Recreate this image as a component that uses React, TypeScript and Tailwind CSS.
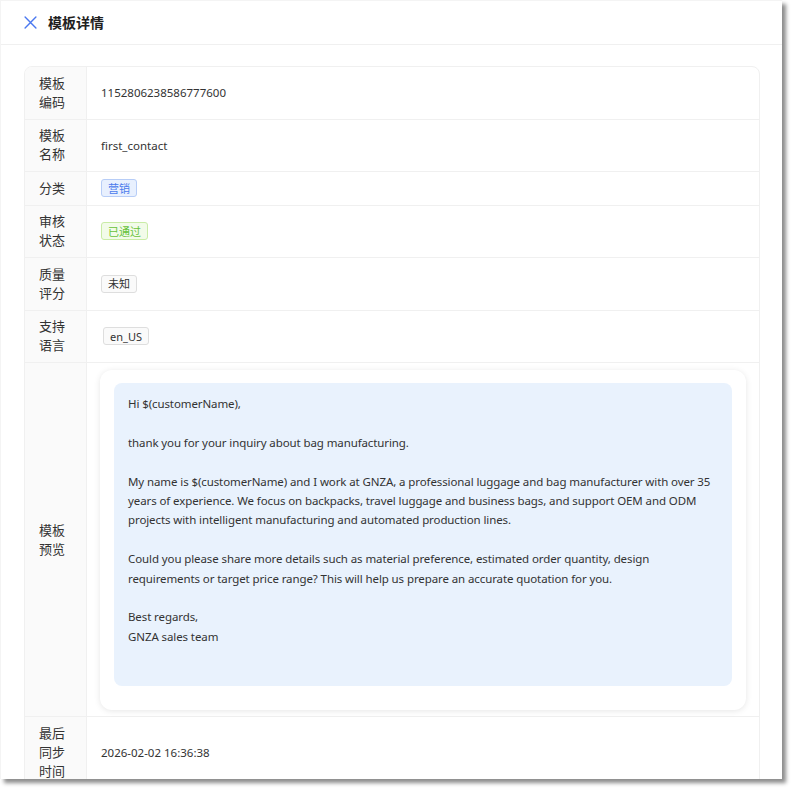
import React from 'react'

const font = { fontFamily: '"Noto Sans", "Noto Sans CJK SC", sans-serif' }

function Tag({ children, tone }: { children: React.ReactNode; tone: 'blue' | 'green' | 'gray' }) {
  const cls =
    tone === 'blue'
      ? 'bg-[#e8f0fe] border-[#b7cdf7] text-[#4b7bec]'
      : tone === 'green'
      ? 'bg-[#f2fbe9] border-[#c9eca6] text-[#67c23a]'
      : 'bg-[#fafafa] border-[#dedede] text-[#333]'
  return (
    <span className={`inline-flex items-center h-[18px] px-[6px] rounded-[3px] border text-[11px] leading-none ${cls}`}>
      {children}
    </span>
  )
}

function Row({ label, children, last }: { label: string; children: React.ReactNode; last?: boolean }) {
  return (
    <div className={`flex ${last ? '' : 'border-b border-[#f0f0f0]'}`}>
      <div className="w-[62px] shrink-0 bg-[#fafafa] border-r border-[#f0f0f0] px-[14px] py-[6.75px] flex items-center text-[13px] leading-[19px] text-[#333]">
        <span>{label}</span>
      </div>
      <div className="flex-1 px-[14px] py-[6.75px] flex items-center text-[11.5px] leading-[19px] text-[#333]">
        {children}
      </div>
    </div>
  )
}

const message = [
  'Hi $(customerName),',
  '',
  'thank you for your inquiry about bag manufacturing.',
  '',
  'My name is $(customerName) and I work at GNZA, a professional luggage and bag manufacturer with over 35 years of experience. We focus on backpacks, travel luggage and business bags, and support OEM and ODM projects with intelligent manufacturing and automated production lines.',
  '',
  'Could you please share more details such as material preference, estimated order quantity, design requirements or target price range? This will help us prepare an accurate quotation for you.',
  '',
  'Best regards,',
  'GNZA sales team',
]

export default function App() {
  return (
    <div className="w-[793px] h-[790px] bg-white" style={font}>
      <div className="w-[782px] h-[779px] bg-white overflow-hidden flex flex-col border-l border-t border-[#f4f4f4] shadow-[4px_4px_4px_rgba(0,0,0,0.45)]">
        {/* header */}
        <div className="h-[44px] shrink-0 flex items-center gap-[11px] px-[23px] border-b border-[#f0f0f0]">
          <svg width="13" height="13" viewBox="0 0 12 12" fill="none">
            <path d="M1 1L11 11M11 1L1 11" stroke="#4a78f0" strokeWidth="1.3" strokeLinecap="round" />
          </svg>
          <span className="text-[14px] font-bold text-[#1f1f1f] leading-none">模板详情</span>
        </div>

        {/* body */}
        <div className="pt-[21px] pl-[23px] pr-[22px]">
          <div className="border border-[#f0f0f0] rounded-t-[8px] overflow-hidden">
            <Row label="模板编码">1152806238586777600</Row>
            <Row label="模板名称">first_contact</Row>
            <Row label="分类">
              <Tag tone="blue">营销</Tag>
            </Row>
            <Row label="审核状态">
              <Tag tone="green">已通过</Tag>
            </Row>
            <Row label="质量评分">
              <Tag tone="gray">未知</Tag>
            </Row>
            <Row label="支持语言">
              <span className="ml-[2px]">
                <Tag tone="gray">en_US</Tag>
              </span>
            </Row>
            <div className="flex border-b border-[#f0f0f0]">
              <div className="w-[62px] shrink-0 bg-[#fafafa] border-r border-[#f0f0f0] px-[14px] flex items-center text-[13px] leading-[19px] text-[#333]">
                <span>模板预览</span>
              </div>
              <div className="flex-1 px-[13px] pt-[7px] pb-[6px]">
                <div className="bg-white rounded-[12px] shadow-[0_1px_6px_rgba(0,0,0,0.10)] pt-[13px] pb-[24px] px-[14px]">
                  <div className="bg-[#e9f2fd] rounded-[8px] px-[14px] pt-[11px] pb-[40px] text-[11.5px] leading-[19.4px] tracking-[-0.1px] text-[#333]">
                    {message.map((l, i) => (
                      <div key={i} className="min-h-[19.4px]">
                        {l}
                      </div>
                    ))}
                  </div>
                </div>
              </div>
            </div>
            <Row label="最后同步时间" last>
              2026-02-02 16:36:38
            </Row>
          </div>
        </div>
      </div>
    </div>
  )
}
